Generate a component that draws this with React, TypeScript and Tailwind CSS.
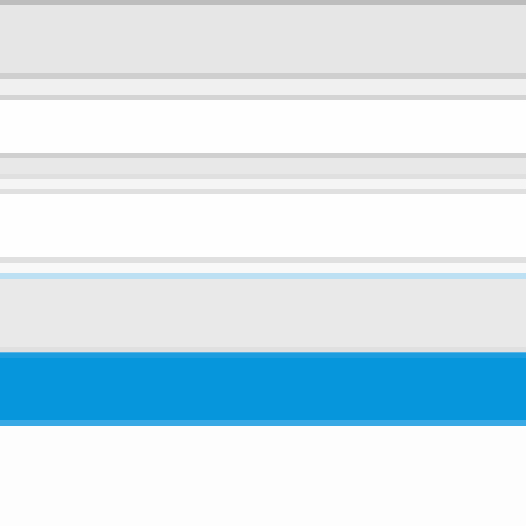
export default function App() {
  return (
    <div className="flex h-[526px] w-[526px] flex-col overflow-hidden bg-[#fdfdfd]">
      <div className="h-[5px] shrink-0 bg-[#bdbdbd]" />
      <div className="h-[68px] shrink-0 bg-[#e6e6e6]" />
      <div className="h-[6px] shrink-0 bg-[#cfcfcf]" />
      <div className="h-[16px] shrink-0 bg-[#f0f0f0]" />
      <div className="h-[5px] shrink-0 bg-[#d4d4d4]" />
      <div className="h-[53px] shrink-0 bg-[#fefefe]" />
      <div className="h-[5px] shrink-0 bg-[#d0d0d0]" />
      <div className="h-[16px] shrink-0 bg-[#e8e8e8]" />
      <div className="h-[5px] shrink-0 bg-[#e0e0e0]" />
      <div className="h-[10px] shrink-0 bg-[#f5f5f5]" />
      <div className="h-[5px] shrink-0 bg-[#e0e0e0]" />
      <div className="h-[63px] shrink-0 bg-[#fefefe]" />
      <div className="h-[6px] shrink-0 bg-[#e0e0e0]" />
      <div className="h-[10px] shrink-0 bg-[#f8f8f8]" />
      <div className="h-[6px] shrink-0 bg-[#bde0f2]" />
      <div className="h-[68px] shrink-0 bg-[#e9e9e9]" />
      <div className="h-[5px] shrink-0 bg-[#e0e0e0]" />
      <div className="h-[1px] shrink-0 bg-[#5ab3e5]" />
      <div className="h-[5px] shrink-0 bg-[#1b9de0]" />
      <div className="h-[62px] shrink-0 bg-[#0596dc]" />
      <div className="h-[6px] shrink-0 bg-[#38a9e4]" />
      <div className="flex-1 bg-[#fdfdfd]" />
    </div>
  );
}
